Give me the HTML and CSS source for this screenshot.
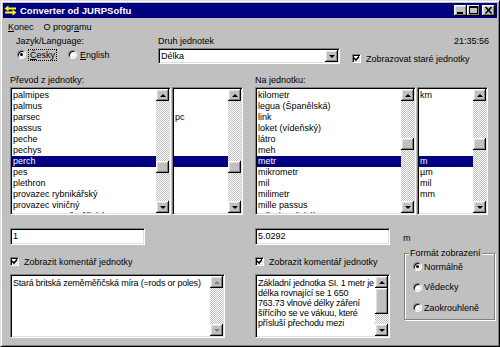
FILE: index.html
```html
<!DOCTYPE html>
<html lang="cs">
<head>
    <meta charset="UTF-8">
    <title>Converter od JURPSoftu</title>
    <link rel="stylesheet" href="styles.css">
</head>
<body>
<div class="window">
    <div class="titlebar">
        <svg class="appicon" width="13" height="11" viewBox="0 0 13 11">
            <path d="M4 3.5h8" stroke="#ffff00" stroke-width="2"/>
            <path d="M0.5 3.5l4-3v6z" fill="#ffff00"/>
            <path d="M1 7.5h8" stroke="#ffff00" stroke-width="2"/>
            <path d="M12.5 7.5l-4-3v6z" fill="#ffff00"/>
        </svg>
        <span class="title">Converter od JURPSoftu</span>
        <div class="tbtns">
            <span class="tbtn"><svg width="13" height="11" viewBox="0 0 13 11"><rect x="3" y="7" width="6" height="2"/></svg></span>
            <span class="tbtn"><svg width="13" height="11" viewBox="0 0 13 11"><rect x="2.5" y="1.5" width="8" height="7" fill="none" stroke="#000"/><rect x="2" y="1" width="9" height="2"/></svg></span>
            <span class="tbtn close"><svg width="13" height="11" viewBox="0 0 13 11"><path d="M3.5 2l6 6.5M9.5 2l-6 6.5" stroke="#000" stroke-width="1.6"/></svg></span>
        </div>
    </div>

    <div class="menubar">
        <span class="menu"><u>K</u>onec</span>
        <span class="menu">O progr<u>a</u>mu</span>
    </div>

    <div class="top">
        <div class="lang">
            <div class="line">Jazyk/Language:</div>
            <div class="radios">
                <span class="opt"><span class="radio on"></span><span class="focus"><u>Č</u>esky</span></span>
                <span class="opt second"><span class="radio"></span><span class="opt-text"><u>E</u>nglish</span></span>
            </div>
        </div>
        <div class="kind">
            <div class="line">Druh jednotek</div>
            <div class="select">
                <span class="select-text">Délka</span>
                <span class="sbtn"><span class="arrow-down"></span></span>
            </div>
        </div>
        <div class="opts">
            <div class="line clock">21:35:56</div>
            <div class="check"><span class="box on"></span><span>Zobrazovat staré jednotky</span></div>
        </div>
    </div>

    <div class="panels">
        <div class="panel">
            <div class="line label">Převod z jednotky:</div>
            <div class="lists">
                <div class="listbox main">
                    <div class="items">
                        <div class="item">palmipes</div>
                        <div class="item">palmus</div>
                        <div class="item">parsec</div>
                        <div class="item">passus</div>
                        <div class="item">peche</div>
                        <div class="item">pechys</div>
                        <div class="item sel">perch</div>
                        <div class="item">pes</div>
                        <div class="item">plethron</div>
                        <div class="item">provazec rybnikářský</div>
                        <div class="item">provazec viničný</div>
                        <div class="item">provazec zeměměřický</div>
                    </div>
                    <div class="vscroll">
                        <span class="sbtn"><span class="arrow-up"></span></span>
                        <span class="track-gap" style="height:60px"></span>
                        <span class="thumb"></span>
                        <span class="track"></span>
                        <span class="sbtn"><span class="arrow-down"></span></span>
                    </div>
                </div>
                <div class="listbox abbr">
                    <div class="items">
                        <div class="item"></div>
                        <div class="item"></div>
                        <div class="item">pc</div>
                        <div class="item"></div>
                        <div class="item"></div>
                        <div class="item"></div>
                        <div class="item sel"></div>
                    </div>
                    <div class="vscroll">
                        <span class="sbtn"><span class="arrow-up"></span></span>
                        <span class="track-gap" style="height:60px"></span>
                        <span class="thumb"></span>
                        <span class="track"></span>
                        <span class="sbtn"><span class="arrow-down"></span></span>
                    </div>
                </div>
            </div>
            <div class="lower">
                <div class="col wide">
                    <div class="field">1</div>
                    <div class="check"><span class="box on"></span><span>Zobrazit komentář jednotky</span></div>
                    <div class="memo">
                        <div class="memo-text">Stará britská zeměměřičská míra (=rods or poles)</div>
                        <div class="vscroll">
                            <span class="sbtn"><span class="arrow-up off"></span></span>
                            <span class="track"></span>
                            <span class="sbtn"><span class="arrow-down off"></span></span>
                        </div>
                    </div>
                </div>
            </div>
        </div>

        <div class="panel">
            <div class="line label">Na jednotku:</div>
            <div class="lists">
                <div class="listbox main">
                    <div class="items">
                        <div class="item">kilometr</div>
                        <div class="item">legua (Španělská)</div>
                        <div class="item">link</div>
                        <div class="item">loket (vídeňský)</div>
                        <div class="item">látro</div>
                        <div class="item">meh</div>
                        <div class="item sel">metr</div>
                        <div class="item">mikrometr</div>
                        <div class="item">mil</div>
                        <div class="item">milimetr</div>
                        <div class="item">mille passus</div>
                        <div class="item">míle (anglická)</div>
                    </div>
                    <div class="vscroll">
                        <span class="sbtn"><span class="arrow-up"></span></span>
                        <span class="track-gap" style="height:37px"></span>
                        <span class="thumb"></span>
                        <span class="track"></span>
                        <span class="sbtn"><span class="arrow-down"></span></span>
                    </div>
                </div>
                <div class="listbox abbr">
                    <div class="items">
                        <div class="item">km</div>
                        <div class="item"></div>
                        <div class="item"></div>
                        <div class="item"></div>
                        <div class="item"></div>
                        <div class="item"></div>
                        <div class="item sel">m</div>
                        <div class="item">µm</div>
                        <div class="item">mil</div>
                        <div class="item">mm</div>
                    </div>
                    <div class="vscroll">
                        <span class="sbtn"><span class="arrow-up"></span></span>
                        <span class="track-gap" style="height:37px"></span>
                        <span class="thumb"></span>
                        <span class="track"></span>
                        <span class="sbtn"><span class="arrow-down"></span></span>
                    </div>
                </div>
            </div>
            <div class="lower">
                <div class="col">
                    <div class="field">5.0292</div>
                    <div class="check"><span class="box on"></span><span>Zobrazit komentář jednotky</span></div>
                    <div class="memo">
                        <div class="memo-text">Základní jednotka SI. 1 metr je<br>délka rovnající se 1 650<br>763.73 vlnové délky záření<br>šířícího se ve vákuu, které<br>přísluší přechodu mezi</div>
                        <div class="vscroll">
                            <span class="sbtn"><span class="arrow-up"></span></span>
                            <span class="thumb tall"></span>
                            <span class="track"></span>
                            <span class="sbtn"><span class="arrow-down"></span></span>
                        </div>
                    </div>
                </div>
                <div class="side">
                    <div class="line unit">m</div>
                    <div class="group">
                        <div class="group-title">Formát zobrazení</div>
                        <div class="opt row first"><span class="radio on"></span><span class="opt-text">Normálně</span></div>
                        <div class="opt row"><span class="radio"></span><span class="opt-text">Vědecky</span></div>
                        <div class="opt row"><span class="radio"></span><span class="opt-text">Zaokrouhleně</span></div>
                    </div>
                </div>
            </div>
        </div>
    </div>
</div>
</body>
</html>
```

FILE: styles.css
```css
*{
    margin: 0;
    padding: 0;
    box-sizing: border-box;
}
html,body{
    width: 500px;
    height: 347px;
    overflow: hidden;
}
body{
    font: 9px "Liberation Sans", Arial, sans-serif;
    color: #000;
    background: #c0c0c0;
}
.window{
    width: 500px;
    height: 347px;
    padding: 2px;
    background: #c0c0c0;
    border: 1px solid;
    border-color: #dfdfdf #000 #000 #dfdfdf;
    box-shadow: inset 1px 1px #fff, inset -1px -1px #808080;
}

/* title bar */
.titlebar{
    height: 15px;
    background: #000080;
    color: #fff;
    display: flex;
    align-items: center;
    padding: 0 2px 0 1px;
}
.appicon{
    margin-right: 3px;
    flex: none;
}
.title{
    flex: 1;
    font-weight: bold;
    font-size: 9.5px;
    white-space: nowrap;
}
.tbtns{
    display: flex;
}
.tbtn{
    width: 13px;
    height: 11px;
    display: flex;
    background: #c0c0c0;
    box-shadow: inset -1px -1px #000, inset 1px 1px #fff, inset -2px -2px #808080, inset 2px 2px #dfdfdf;
}
.tbtn.close{
    margin-left: 2px;
}

/* menu */
.menubar{
    display: flex;
    height: 16px;
    line-height: 16px;
    margin-top: 1px;
}
.menu{
    padding: 0 5px;
}

/* common */
.line{
    height: 11px;
    line-height: 11px;
    white-space: nowrap;
}
.opt{
    display: flex;
    align-items: center;
    height: 11px;
    white-space: nowrap;
}
.radio{
    width: 9px;
    height: 9px;
    flex: none;
    border-radius: 50%;
    background: #fff;
    border: 1px solid;
    border-color: #808080 #fff #fff #808080;
    box-shadow: inset 1px 1px #000, inset -1px -1px #dfdfdf;
    display: flex;
    align-items: center;
    justify-content: center;
}
.radio.on::after{
    content: "";
    width: 3px;
    height: 3px;
    border-radius: 50%;
    background: #000;
}
.opt-text{
    margin-left: 3px;
}
.focus{
    margin-left: 3px;
    padding: 0 1px;
    outline: 1px dotted #000;
    line-height: 10px;
}
.check{
    display: flex;
    align-items: center;
    height: 11px;
    white-space: nowrap;
}
.box{
    width: 9px;
    height: 9px;
    flex: none;
    margin-right: 5px;
    background: #fff;
    border: 1px solid;
    border-color: #808080 #fff #fff #808080;
    box-shadow: inset 1px 1px #000, inset -1px -1px #dfdfdf;
}
.box.on{
    background: #fff url("data:image/svg+xml,%3Csvg xmlns='http://www.w3.org/2000/svg' width='7' height='7'%3E%3Cpath d='M1 3l2 2 3.5-4' fill='none' stroke='%23000' stroke-width='1.6'/%3E%3C/svg%3E") center/7px 7px no-repeat;
}
.listbox,.select,.field,.memo{
    background: #fff;
    border: 1px solid;
    border-color: #808080 #fff #fff #808080;
    box-shadow: inset 1px 1px #000, inset -1px -1px #dfdfdf;
    padding: 1px;
}
.sbtn{
    width: 13px;
    height: 12px;
    flex: none;
    background: #c0c0c0;
    box-shadow: inset -1px -1px #000, inset 1px 1px #fff, inset -2px -2px #808080, inset 2px 2px #dfdfdf;
    display: flex;
    align-items: center;
    justify-content: center;
}
.arrow-up{
    width: 0;
    height: 0;
    border-left: 3px solid transparent;
    border-right: 3px solid transparent;
    border-bottom: 3px solid #000;
}
.arrow-down{
    width: 0;
    height: 0;
    border-left: 3px solid transparent;
    border-right: 3px solid transparent;
    border-top: 3px solid #000;
}
.arrow-up.off{
    border-bottom-color: #808080;
}
.arrow-down.off{
    border-top-color: #808080;
}

/* top row */
.top{
    display: flex;
    height: 30px;
}
.lang{
    width: 142px;
    margin-left: 13px;
    padding-top: 1px;
}
.radios{
    display: flex;
    margin: 2px 0 0 1px;
}
.second{
    margin-left: 12px;
}
.kind{
    width: 182px;
    padding-top: 1px;
}
.select{
    display: flex;
    height: 16px;
    margin-top: 1px;
}
.select-text{
    flex: 1;
    line-height: 12px;
    padding-left: 1px;
}
.opts{
    flex: 1;
    margin-left: 12px;
    padding: 1px 8px 0 0;
}
.clock{
    text-align: right;
}
.opts .check{
    margin-top: 6px;
}

/* panels */
.panels{
    display: flex;
    gap: 12px;
    padding-left: 7px;
}
.panel{
    width: 233px;
    flex: none;
}
.label{
    margin-top: 10px;
}
.lists{
    display: flex;
    gap: 1px;
    height: 128px;
    margin-top: 1px;
}
.listbox{
    display: flex;
}
.listbox.main{
    width: 161px;
}
.listbox.abbr{
    width: 71px;
}
.items{
    flex: 1;
    padding-top: 1px;
    overflow: hidden;
}
.item{
    height: 11px;
    line-height: 11px;
    padding-left: 1px;
    white-space: nowrap;
}
.item.sel{
    background: #000080;
    color: #fff;
}
.vscroll{
    width: 13px;
    flex: none;
    display: flex;
    flex-direction: column;
    background: repeating-conic-gradient(#c0c0c0 0 25%, #fff 0 50%) 0 0/2px 2px;
}
.track-gap{
    flex: none;
}
.track{
    flex: 1;
}
.thumb{
    height: 12px;
    flex: none;
    background: #c0c0c0;
    box-shadow: inset -1px -1px #000, inset 1px 1px #fff, inset -2px -2px #808080, inset 2px 2px #dfdfdf;
}
.thumb.tall{
    height: 26px;
}

/* lower part */
.lower{
    display: flex;
    margin-top: 13px;
}
.col{
    width: 135px;
    flex: none;
}
.col.wide{
    width: 215px;
}
.field{
    width: 135px;
    height: 17px;
    line-height: 13px;
    padding-left: 2px;
}
.col .check{
    margin-top: 11px;
}
.memo{
    display: flex;
    height: 64px;
    margin-top: 7px;
}
.memo-text{
    flex: 1;
    padding: 2px 0 0 1px;
    line-height: 10px;
    letter-spacing: -0.2px;
    white-space: nowrap;
    overflow: hidden;
}
.side{
    margin-left: 13px;
}
.unit{
    margin-top: 5px;
}
.group{
    width: 91px;
    height: 67px;
    margin: 9px 0 0 1px;
    border: 1px solid #808080;
    box-shadow: inset 1px 1px #fff, 1px 1px #fff;
    padding-left: 8px;
}
.group-title{
    width: fit-content;
    margin: -6px 0 0 -4px;
    padding: 0 1px;
    line-height: 11px;
    background: #c0c0c0;
    white-space: nowrap;
}
.row{
    margin-top: 9.5px;
}
.row.first{
    margin-top: 2px;
}
.row .opt-text{
    margin-left: 2px;
}
```
